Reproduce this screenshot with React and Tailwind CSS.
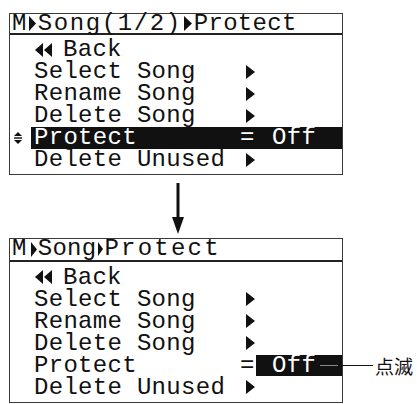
import React from "react";

const mono = { fontFamily: '"Liberation Mono", "DejaVu Sans Mono", monospace' };

function TriR({ w = 9, h = 14 }) {
  return (
    <svg width={w} height={h} viewBox={`0 0 ${w} ${h}`} className="shrink-0">
      <polygon points={`0,0 ${w},${h / 2} 0,${h}`} fill="#111" />
    </svg>
  );
}

function TriL({ w = 8, h = 14 }) {
  return (
    <svg width={w} height={h} viewBox={`0 0 ${w} ${h}`} className="shrink-0">
      <polygon points={`${w},0 0,${h / 2} ${w},${h}`} fill="#111" />
    </svg>
  );
}

function UpDown() {
  return (
    <svg width="8" height="12" viewBox="0 0 8 12" className="shrink-0">
      <polygon points="4,0 8,4 0,4" fill="#111" />
      <rect x="0" y="5.3" width="8" height="1.4" fill="#111" />
      <polygon points="0,8 8,8 4,12" fill="#111" />
    </svg>
  );
}

function Row({ children, left = null }) {
  return (
    <div className="flex h-[22px] items-center">
      <div className="flex h-full w-[21px] shrink-0 items-center pl-[4px]">{left}</div>
      <div className="flex h-full min-w-0 flex-1 items-center pl-[3px] leading-[22px]">{children}</div>
    </div>
  );
}

function Label({ children }) {
  return <span className="inline-block w-[206px] shrink-0 whitespace-pre">{children}</span>;
}

function Arrow() {
  return (
    <span className="flex w-[16px] shrink-0 items-center pl-[6px] pb-[1px]">
      <TriR />
    </span>
  );
}

function BackRow() {
  return (
    <Row>
      <span className="flex w-[29px] shrink-0 items-center gap-[1px] pl-[1px] pb-[1px]">
        <TriL />
        <TriL />
      </span>
      <span>Back</span>
    </Row>
  );
}

function CommonRows() {
  return (
    <>
      <BackRow />
      <Row>
        <Label>Select Song</Label>
        <Arrow />
      </Row>
      <Row>
        <Label>Rename Song</Label>
        <Arrow />
      </Row>
      <Row>
        <Label>Delete Song</Label>
        <Arrow />
      </Row>
    </>
  );
}

export default function App() {
  return (
    <div
      className="flex h-[404px] w-[417px] flex-col overflow-hidden bg-white text-[24px] tracking-[0.3px] text-[#111]"
      style={mono}
    >
      {/* Screen 1 */}
      <div className="ml-[9px] mt-[13px] flex h-[162px] w-[334px] shrink-0 flex-col border-[1.5px] border-[#3a3a3a]">
        <div className="flex h-[21px] shrink-0 items-center border-b-2 border-[#222] pl-[2px] leading-[22px]">
          <span>M</span>
          <span className="flex w-[11px] shrink-0 items-center pl-[2px]">
            <TriR w={7} h={15} />
          </span>
          <span className="tracking-[1.6px]">Song(1/2)</span>
          <span className="flex w-[12px] shrink-0 items-center pl-[2px]">
            <TriR w={8} h={15} />
          </span>
          <span>Protect</span>
        </div>
        <div className="pt-[4px]">
          <CommonRows />
          <div className="flex h-[22px] items-center">
            <div className="flex h-full w-[21px] shrink-0 items-center pl-[4px]">
              <UpDown />
            </div>
            <div className="flex h-full min-w-0 flex-1 items-center bg-[#111] pl-[3px] leading-[22px] text-white">
              <Label>Protect</Label>
              <span className="inline-block w-[16px] shrink-0">=</span>
              <span className="pl-[16px]">Off</span>
            </div>
          </div>
          <Row>
            <Label>Delete Unused</Label>
            <Arrow />
          </Row>
        </div>
      </div>

      {/* Down arrow */}
      <div className="ml-[170px] mt-[8px] mb-[4px] h-[51px] w-[16px] shrink-0">
        <svg width="16" height="51" viewBox="0 0 16 51">
          <rect x="6.5" y="0" width="3" height="38" fill="#111" />
          <polygon points="2,34 14,34 8,51" fill="#111" />
        </svg>
      </div>

      {/* Screen 2 */}
      <div className="ml-[9px] flex h-[165px] w-[334px] shrink-0 flex-col border-[1.5px] border-[#3a3a3a]">
        <div className="flex h-[22.5px] shrink-0 items-center border-b-2 border-[#222] pl-[2px] leading-[22px]">
          <span>M</span>
          <span className="flex w-[11px] shrink-0 items-center pl-[4px]">
            <TriR w={6} h={15} />
          </span>
          <span>Song</span>
          <span className="flex w-[8px] shrink-0 items-center pl-[1px]">
            <TriR w={5} h={14} />
          </span>
          <span className="tracking-[2.2px]">Protect</span>
        </div>
        <div className="pt-[5px]">
          <CommonRows />
          <div className="flex h-[22px] items-center">
            <div className="w-[21px] shrink-0" />
            <div className="flex h-full min-w-0 flex-1 items-center pl-[3px] leading-[22px]">
              <Label>Protect</Label>
              <span className="inline-block w-[16px] shrink-0">=</span>
              <div className="relative flex h-[21px] min-w-0 flex-1 items-center bg-[#111] pl-[16px] text-white">
                <span className="shrink-0">Off</span>
                <span className="ml-[4px] h-px w-[18px] shrink bg-[#8a8a8a]" />
                <div className="absolute left-full top-1/2 flex -translate-y-1/2 items-center">
                  <span className="h-[1.5px] w-[31px] bg-[#111]" />
                  <span
                    className="whitespace-nowrap pl-[2px] text-[19px] tracking-normal text-[#111]"
                    style={{ fontFamily: '"Noto Sans CJK JP", "Noto Sans CJK SC", sans-serif' }}
                  >
                    点滅
                  </span>
                </div>
              </div>
            </div>
          </div>
          <Row>
            <Label>Delete Unused</Label>
            <Arrow />
          </Row>
        </div>
      </div>
    </div>
  );
}
